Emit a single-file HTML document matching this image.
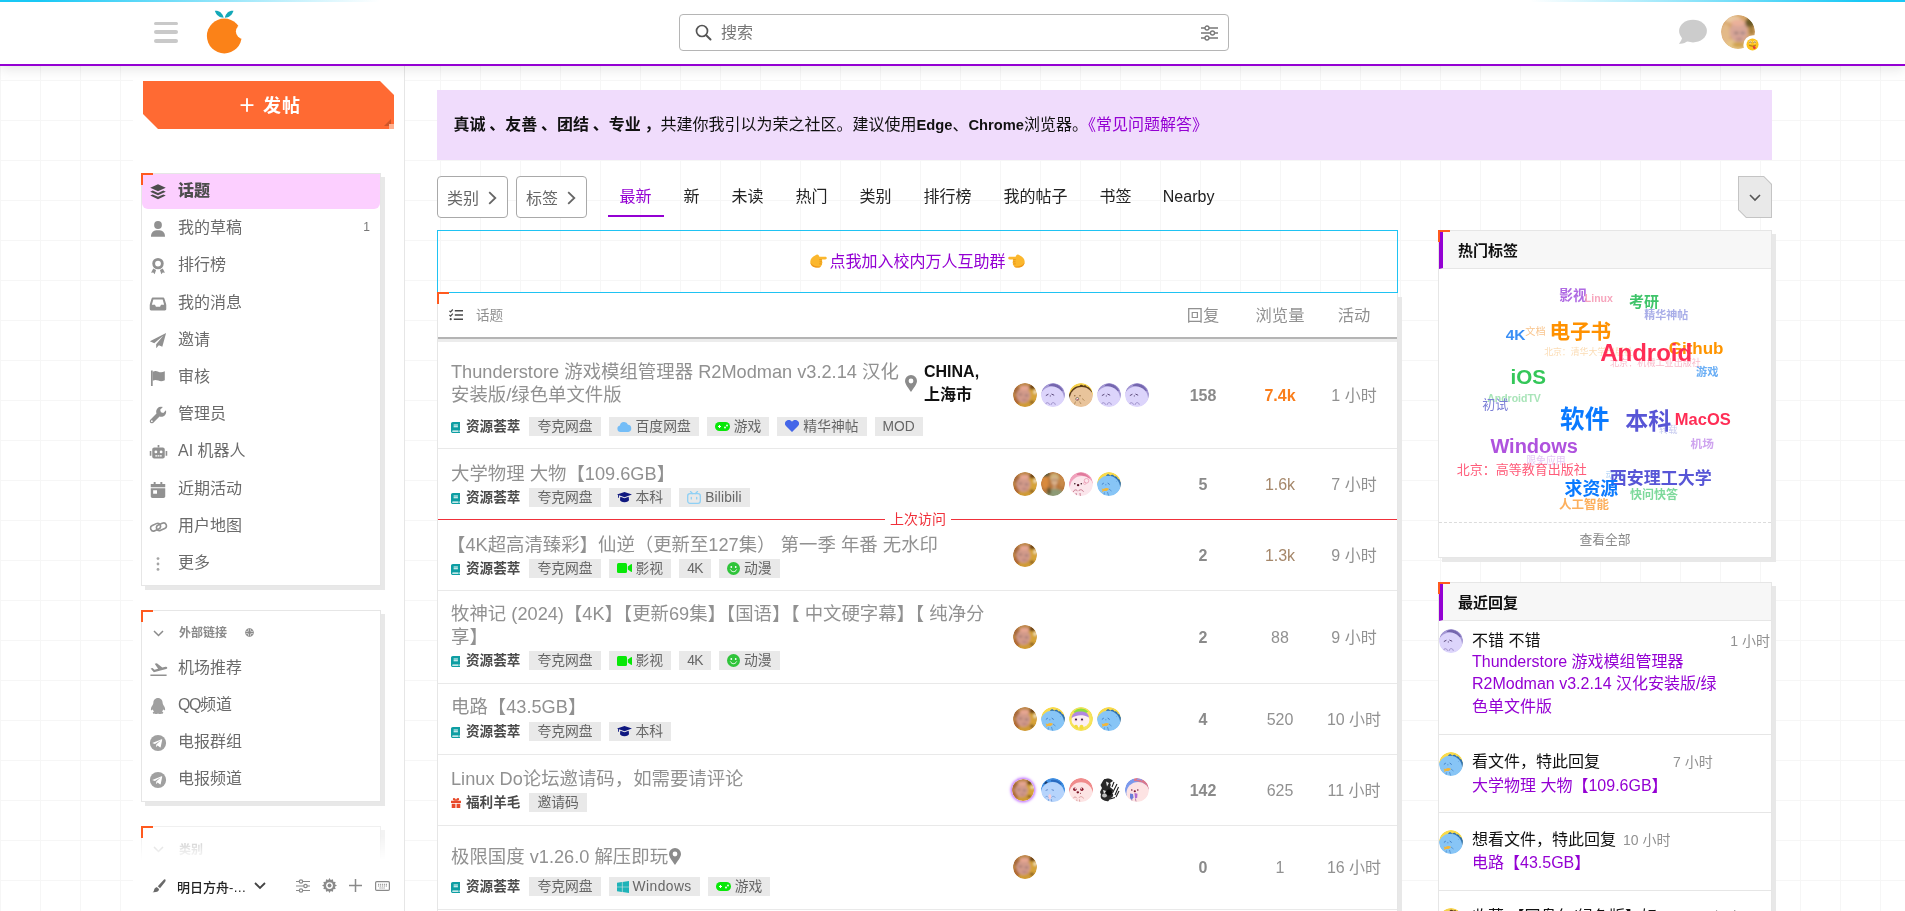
<!DOCTYPE html>
<html lang="zh-CN">
<head>
<meta charset="utf-8">
<title>话题</title>
<style>
*{box-sizing:border-box;margin:0;padding:0}
html,body{width:1905px;height:911px;overflow:hidden}
body{position:relative;font-family:"Liberation Sans","Noto Sans CJK SC",sans-serif;font-size:15px;color:#222;
background-color:#fff;
background-image:linear-gradient(#f6f6f6 1px,transparent 1px),linear-gradient(90deg,#f6f6f6 1px,transparent 1px);
background-size:40px 40px;}
a{color:inherit;text-decoration:none}
ul{list-style:none}
svg{display:block}
.abs{position:absolute}

/* header */
#hdr{position:absolute;left:0;top:0;width:1905px;height:66px;background:#fff;border-bottom:2px solid #9400d3;box-shadow:0 3px 12px rgba(0,0,0,.11);z-index:5}
#topline{position:absolute;left:0;top:0;width:1905px;height:2px;z-index:6;
background:linear-gradient(90deg,#19c8f5 0,#19c8f5 40px,rgba(25,200,245,0) 380px,rgba(25,200,245,0) 1530px,#19c8f5 1860px,#19c8f5 1905px)}
#burger{position:absolute;left:154px;top:21px;width:24px;height:22px}
#burger i{position:absolute;left:0;width:24px;height:3.500px;border-radius:2px;background:#c9c9c9}
#logo{position:absolute;left:203px;top:8px}
#search{position:absolute;left:679px;top:14px;width:550px;height:37px;border:1px solid #b5b5b5;border-radius:4px;background:#fff}
#search .ph{position:absolute;left:41px;top:7px;font-size:16px;color:#777;line-height:22px}
#search .mag{position:absolute;left:14.500px;top:8.500px}
#search .flt{position:absolute;right:10px;top:10px}
#chat{position:absolute;left:1677px;top:18px}
#me{position:absolute;left:1721px;top:15px;width:34px;height:34px;border-radius:50%}
#me-emoji{position:absolute;left:1746px;top:38px;width:13px;height:13px}

/* sidebar */
#sb{position:absolute;left:133px;top:66px;width:272px;height:845px;background:#fff;border-right:1px solid #e6e6e6}
#newbtn{position:absolute;left:10px;top:15px;width:251px;height:48px;background:#ff6a33;color:#fff;font-weight:bold;font-size:18px;
clip-path:polygon(0 0,237px 0,100% 14px,100% 100%,15px 100%,0 33px);text-align:center;line-height:51px;letter-spacing:1px;padding-left:2px}
#newbtn .tri{position:absolute;left:241px;top:37.500px;width:0;height:0;border-left:7px solid transparent;border-bottom:7.300px solid #cf5528}
#newbtn .sq{position:absolute;left:246px;top:43px;width:5px;height:5px;background:#ffb08f}
.card{position:absolute;background:#fff;border:1px solid #e6e6e6;box-shadow:4px 4px 0 #e8e8e8}
.card:before{content:"";position:absolute;left:-1px;top:-1px;width:10px;height:10px;border-left:2px solid #ff5a1f;border-top:2px solid #ff5a1f;z-index:2}
.sbi{position:relative;height:37.2px;line-height:33px;padding-left:36px;font-size:16px;color:#6b6b6b}
.sbi svg{position:absolute;left:8px;top:10px;transform:scale(1.08)}
.sbi.act{background:#fccfff;color:#4d4d4d;font-weight:bold;border-radius:0 0 6px 6px}
.sbh{position:relative;height:37px;line-height:37px;padding-left:37px;font-size:12px;font-weight:bold;color:#8a8a8a}

.sbi b{position:relative}
.sbi .bg{position:absolute;left:0;top:0;right:0;height:35px;background:#fccfff;border-radius:0 0 6px 6px}
.sbi.act{background:none}
.sbi em{position:absolute;right:10px;top:0;font-style:normal;font-size:12px;color:#777}
.sbh .chev{position:absolute;left:11px;top:19px}
.sbh .globe{display:inline-block;margin-left:18px;vertical-align:0}
#c2 .sbh,#c3 .sbh{height:39.500px;line-height:45px}
#c3 .sbh{color:#c6c6c6;padding-top:1px}
#c3{border-color:#f0f0f0;box-shadow:4px 4px 0 #f3f3f3}
#sbfade{position:absolute;left:0;top:770px;width:271px;height:24px;background:linear-gradient(rgba(255,255,255,0),#fff)}
#sbfoot{position:absolute;left:0;top:794px;width:271px;height:51px;background:#fff}
#sbfoot svg{position:absolute;margin-top:6px}
#sbfoot .theme{position:absolute;left:44px;top:17.500px;font-weight:500;font-size:13px;line-height:20px;color:#222}

/* main */
#main{position:absolute;left:437px;top:0;width:1335px;height:911px}
#banner{position:absolute;left:0;top:90px;width:1335px;height:70px;background:#f0dcfc;padding-left:16.500px;line-height:70px;font-size:16px;color:#111;white-space:nowrap}
#banner a{color:#9400d3}
#banner .la{font-size:14.700px}
#nav{position:absolute;left:0;top:176px;width:1335px;height:41px}
.nbtn{position:absolute;top:0;width:71px;height:42px;border:1px solid #a9a9a9;border-radius:4px;background:#fff;font-size:16px;color:#666;line-height:44px;padding-left:9px}
.nbtn svg{position:absolute;right:10.500px;top:14px}
.tab{position:absolute;top:0;margin-left:.6px;height:41px;line-height:42px;text-align:center;font-size:16px;color:#222}
.tab.on{color:#9400d3;border-bottom:2px solid #9400d3}
#ddbtn{position:absolute;right:0;top:0;width:34px;height:42px;background:#c4c4c4;clip-path:polygon(0 0,26px 0,100% 8px,100% 100%,8px 100%,0 34px)}
#ddbtn div{position:absolute;left:1px;top:1px;width:32px;height:40px;background:#e9e9e9;clip-path:polygon(0 0,24.600px 0,100% 7.400px,100% 100%,7.400px 100%,0 32.600px)}
#ddbtn svg{position:absolute;left:10px;top:17px}
#join{position:absolute;left:0;top:230px;width:961px;height:63px;border:1px solid #1fc3f3;display:flex;align-items:center;justify-content:center;font-size:16px;color:#9400d3;padding-bottom:5px}
#join span{margin:0 2px;position:relative;top:1px}
#join svg{position:relative;top:1.500px}
.card2{position:absolute;background:#fff;border:1px solid #e6e6e6;box-shadow:4px 4px 0 #e8e8e8}
.card2:before{content:"";position:absolute;left:-1px;top:-1px;width:10px;height:10px;border-left:2px solid #ff5a1f;border-top:2px solid #ff5a1f;z-index:2}
#list{left:0;top:293px;width:961px;height:640px;border-top:none;border-bottom:none}

#lh{position:absolute;left:0;top:0;width:959px;height:46px;border-bottom:2px solid #b4b4b4;color:#919191}
#lh svg{position:absolute;left:11.200px;top:15.600px}
#lh .t{position:absolute;left:38px;top:12.500px;font-size:13.600px;line-height:20px}
#lh .c{position:absolute;top:10.500px;font-size:16.300px;line-height:22px;text-align:center}
.row{position:absolute;left:0;width:959px;border-bottom:1px solid #e9e9e9}
.row.first{border-top:3px solid #ececec}
.row .tl{position:absolute;font-size:18.400px;line-height:22.300px;color:#919191;white-space:nowrap}
.row .meta{position:absolute;left:13px;display:flex;align-items:center;height:19px;white-space:nowrap}
.cat{display:inline-flex;align-items:center;font-size:13.600px;line-height:19px;font-weight:bold;color:#4a4a4a;margin-right:9px}
.cat .ci{margin-right:6px;margin-top:2px}
.cat .ci.gift{margin-right:5px;margin-top:1px}
.tl .la{font-size:18.200px}
.tag{display:inline-flex;align-items:center;height:19px;line-height:19px;padding:0 8px;background:#e9e9e9;font-size:13.800px;color:#666;margin-right:8px}
.tag svg{margin-right:4px}
.loc{position:absolute;left:467.500px;font-size:16px;line-height:22.800px;color:#111;margin-top:1.700px}
.loc b{display:block;margin-left:18.500px}
.loc .pin{position:absolute;left:-.5px;top:13.700px}
.pin2{display:inline-block;vertical-align:-2.500px;margin-left:.5px}
.avs{position:absolute;left:575px;height:24px;display:flex}
.av{display:block;width:24px;height:24px;border-radius:50%;margin-right:4.100px;flex:none}
.av.ring{width:22px;height:22px;margin:1px 6.800px 1px -1px;box-shadow:0 0 2.500px 1.500px #c77dff}
.num{position:absolute;line-height:23px;text-align:center;width:80px;font-size:16px;color:#919191}
.num.r{left:725px;font-weight:bold;color:#8a8a8a}
.num.v{left:802px}
.num.v.hot{color:#fa7d1a;font-weight:bold}
.num.v.warm{color:#a5876a}
.num.a{left:876px}
#lastvisit{position:absolute;left:0;top:226px;width:959px;height:1px;background:#f0303a}
#lastvisit span{position:absolute;left:447px;top:-10px;background:#fff;padding:0 5px;font-size:14px;line-height:20px;color:#f0303a}

#hot{left:1001px;top:230px;width:334px;height:328px}
#recent{left:1001px;top:582px;width:334px;height:360px}
.ch{position:absolute;left:0;top:0;width:332px;height:38px;background:#f7f7f7;border-bottom:1px solid #e6e6e6;border-left:4px solid #9400d3;font-size:15px;line-height:40px;padding-left:15px;color:#111;font-weight:bold}
#cloud{position:absolute;left:0;top:0;width:332px;height:290px}
.ct{position:absolute;white-space:nowrap;line-height:1;transform:translate(-50%,-50%)}
#viewall{position:absolute;left:0;top:291px;width:332px;height:34px;border-top:1px dashed #dcdcdc;text-align:center;font-size:12.800px;line-height:33px;color:#888}
.rp{position:absolute;left:0;width:332px;border-bottom:1px solid #e6e6e6}
.av2{position:absolute;left:0;width:24px;height:24px;border-radius:50%}
.rp .tx{position:absolute;left:33px;font-size:16px;line-height:22px;color:#111;white-space:nowrap}
.rp .tm{position:absolute;font-size:14px;line-height:20px;color:#919191;white-space:nowrap}
.rp .lk{position:absolute;left:33px;font-size:16px;line-height:22.300px;color:#9400d3;white-space:nowrap}
#wrap{position:absolute;left:0;top:0;width:1905px;height:911px;overflow:hidden;will-change:transform}
</style>
</head>
<body>
<div id="wrap">
<svg width="0" height="0" style="position:absolute" aria-hidden="true"><defs>
<clipPath id="cc"><circle cx="12" cy="12" r="12"/></clipPath>
<filter id="bl" x="-20%" y="-20%" width="140%" height="140%"><feGaussianBlur stdDeviation="1.15"/></filter>
<filter id="bl2" x="-20%" y="-20%" width="140%" height="140%"><feGaussianBlur stdDeviation=".4"/></filter>
<symbol id="a-me" viewBox="0 0 24 24"><g clip-path="url(#cc)"><g filter="url(#bl)">
<rect x="-2" y="-2" width="28" height="28" fill="#bd8648"/>
<ellipse cx="20" cy="12" rx="5" ry="9" fill="#d6a338"/>
<ellipse cx="12" cy="23" rx="10" ry="4.500" fill="#cf9a34"/>
<ellipse cx="3" cy="18" rx="3.500" ry="5" fill="#b06a30"/>
<ellipse cx="19.500" cy="4" rx="3" ry="2.500" fill="#6e4518"/>
<ellipse cx="22" cy="9" rx="1.500" ry="2" fill="#f3e6c0"/>
<ellipse cx="3" cy="7" rx="3" ry="4" fill="#a86a3a"/>
<ellipse cx="10.500" cy="12.500" rx="7" ry="7.500" fill="#d19a8a"/>
<ellipse cx="11.500" cy="5" rx="4.500" ry="2.300" fill="#e6a692"/>
<ellipse cx="7.500" cy="11.500" rx="2" ry="1" fill="#a87a72"/>
<ellipse cx="13.500" cy="12.500" rx="2" ry="1" fill="#a07a7a"/>
<ellipse cx="11.500" cy="17" rx="2.500" ry="1" fill="#b8807a"/>
<ellipse cx="19" cy="19" rx="2" ry="1.500" fill="#7a5420"/>
</g></g></symbol>
<symbol id="a-me2" viewBox="0 0 24 24"><g clip-path="url(#cc)"><g filter="url(#bl)">
<rect x="-2" y="-2" width="28" height="28" fill="#d6a468"/>
<ellipse cx="9" cy="22" rx="10" ry="5" fill="#e6c486"/>
<ellipse cx="3" cy="13" rx="3.500" ry="7" fill="#e3b988"/>
<ellipse cx="20.500" cy="5.500" rx="3.500" ry="3.500" fill="#6b5a28"/>
<ellipse cx="21.500" cy="11" rx="2" ry="3" fill="#a8803a"/>
<ellipse cx="8" cy="3" rx="6" ry="2.500" fill="#e9c9a0"/>
<ellipse cx="12.500" cy="12" rx="6.500" ry="7.500" fill="#d8a698"/>
<ellipse cx="12" cy="5.500" rx="5" ry="2.300" fill="#eab09a"/>
<ellipse cx="10.800" cy="12.700" rx="1.600" ry=".9" fill="#8f7272"/>
<ellipse cx="15.300" cy="12.700" rx="1.600" ry=".9" fill="#8f7a80"/>
<ellipse cx="13" cy="17" rx="2.500" ry="1.200" fill="#b98a86"/>
<ellipse cx="13" cy="21" rx="5" ry="2" fill="#cfa24c"/>
</g></g></symbol>
<symbol id="a-pur" viewBox="0 0 24 24"><g clip-path="url(#cc)"><g filter="url(#bl2)">
<rect width="24" height="24" fill="#a498d4"/>
<path d="M8 2c4-2.500 10-1.500 14 5.500l-2 1.500c-3-4-6-6-12-6z" fill="#7466ae"/>
<circle cx="11" cy="15.600" r="12" fill="#dcd4fb"/>
<path d="M5.200 12.400l1.900-1M10.800 11.200l2 .9" stroke="#5b4a7a" stroke-width="1" stroke-linecap="round"/>
<circle cx="9.300" cy="12.900" r=".55" fill="#5b4a7a"/>
<path d="M4.500 22c0-3 3.500-3 4-.3M10 22c.3-3 4-3.200 4.300-.2" stroke="#8678b8" stroke-width=".7" fill="none"/>
</g></g></symbol>
<symbol id="a-tan" viewBox="0 0 24 24"><g clip-path="url(#cc)"><g filter="url(#bl2)">
<rect width="24" height="24" fill="#f6d24e"/>
<path d="M-1 16C0 7 7 2.500 10.500 3c.8-1.800 3-1.600 3.700-.2 1.400-1.200 3.200-.5 3.600 1 2 0 3.400 1.400 5.200 5V26H-1z" fill="#5a3a18"/>
<circle cx="12.700" cy="16" r="11.900" fill="#e9c49b"/>
<circle cx="5.800" cy="12.800" r=".7" fill="#8a6238"/><circle cx="11" cy="12.800" r=".7" fill="#8a6238"/>
<circle cx="8.300" cy="16" r="1.500" fill="#fff" stroke="#4a3a2a" stroke-width=".6"/>
<ellipse cx="8.400" cy="16.600" rx=".6" ry=".8" fill="#e0506a"/>
<path d="M6.500 18.500l-1 3M10.500 18.500l1.500 2.500M13 15.500l2.500 2" stroke="#a07a48" stroke-width=".7"/>
</g></g></symbol>
<symbol id="a-ph" viewBox="0 0 24 24"><g clip-path="url(#cc)"><g filter="url(#bl)">
<rect x="-2" y="-2" width="28" height="28" fill="#b9783c"/>
<ellipse cx="4" cy="10" rx="3.500" ry="7" fill="#d98a3e"/>
<ellipse cx="21" cy="9" rx="3" ry="6" fill="#c98a4a"/>
<ellipse cx="3" cy="2" rx="6" ry="3" fill="#5a5a3a"/>
<ellipse cx="13.500" cy="5.500" rx="4.500" ry="4" fill="#cdb47a"/>
<ellipse cx="13.500" cy="9" rx="3.200" ry="4.300" fill="#d9b08a"/>
<ellipse cx="12.300" cy="8" rx=".9" ry=".6" fill="#5a4030"/><ellipse cx="15" cy="8" rx=".9" ry=".6" fill="#5a4030"/>
<ellipse cx="13.500" cy="15.500" rx="2" ry="2.500" fill="#c99a72"/>
<ellipse cx="14" cy="22" rx="9" ry="5" fill="#8d9a74"/>
<ellipse cx="8" cy="19" rx="2" ry="3.500" fill="#6a5a32"/>
</g></g></symbol>
<symbol id="a-pink" viewBox="0 0 24 24"><g clip-path="url(#cc)"><g filter="url(#bl2)">
<rect width="24" height="24" fill="#f0a2bc"/>
<path d="M8 1.500c4-2 9-.5 13 4.500l-1.500 1C16 3.500 12 2.500 8 3z" fill="#e07a9c"/>
<circle cx="12.800" cy="15.800" r="11.900" fill="#fbe6ec"/>
<circle cx="17.500" cy="8.800" r="2.300" fill="#fbe6ec" stroke="#eb9ab4" stroke-width=".8"/>
<circle cx="15.800" cy="11.300" r="1.200" fill="none" stroke="#eb9ab4" stroke-width=".6"/>
<circle cx="5.800" cy="11.800" r=".8" fill="#3a1a22"/><circle cx="12.300" cy="11.800" r=".8" fill="#3a1a22"/>
<ellipse cx="9.100" cy="13.200" rx="1.200" ry="1.100" fill="#5a1428"/>
<path d="M4.300 20c.8-2.500 3.200-2.800 4.300-.8M9.500 19c1.500-2 4-1.500 5 .8M7 21l.5 3M11 21l.3 3" stroke="#b4506c" stroke-width=".7" fill="none"/>
</g></g></symbol>
<symbol id="a-blue" viewBox="0 0 24 24"><g clip-path="url(#cc)"><g filter="url(#bl2)">
<rect width="24" height="24" fill="#f8da4c"/>
<path d="M9 4c1-2.300 3.200-2.300 4.200-.2 1.200-1.600 3.500-1.200 4.200.7 1.500-.6 3 .5 3.200 2 1.500.3 2.500 1.500 3.300 4V24H2z" fill="#2f6fae"/>
<circle cx="11.200" cy="15.600" r="11.900" fill="#87c5f6"/>
<path d="M5.200 12.200l1.300-.9M11 11.300l1.400 1" stroke="#3a78c0" stroke-width=".9" stroke-linecap="round"/>
<circle cx="8.900" cy="12.700" r=".5" fill="#3a78c0"/>
<path d="M19 9l.8.800" stroke="#5a9ad8" stroke-width=".6"/>
<path d="M4.500 16.500l2 .6c1.500-1.300 3.500-1.300 5.500-.4-1 1.800-3 2.800-5.200 2.200L5 20.200l.5-1.700z" fill="#f2b63a"/>
<path d="M12 17l2.500 2M7.500 20.500l-1 3M10.500 20l1 3.500" stroke="#3a78c0" stroke-width=".6" fill="none"/>
</g></g></symbol>
<symbol id="a-yel" viewBox="0 0 24 24"><g clip-path="url(#cc)"><g filter="url(#bl2)">
<rect width="24" height="24" fill="#f7e65c"/>
<ellipse cx="11.500" cy="2.500" rx="8.500" ry="4.500" fill="#8ee03c"/>
<ellipse cx="11.500" cy="13" rx="9" ry="7.500" fill="#fdeff3"/>
<path d="M2.500 11c.5-5 4.500-6.500 9-6.500s8 1.500 8.500 6c-3-1.800-5.500-2.300-8.500-2.300s-6 .8-9 2.800z" fill="#b088e0"/>
<circle cx="6.800" cy="12.700" r="1.800" fill="#f7d3e0"/><circle cx="13" cy="12.700" r="1.800" fill="#f7d3e0"/>
<circle cx="7" cy="12.600" r="1" fill="#2a1838"/><circle cx="13" cy="12.600" r="1" fill="#2a1838"/>
<ellipse cx="7" cy="20.500" rx="2" ry="2.800" fill="#f3dc3c"/><ellipse cx="12.500" cy="20.500" rx="2" ry="2.800" fill="#f3dc3c"/>
<circle cx="12" cy="12" r="11.200" fill="none" stroke="#f5e15a" stroke-width="1.600"/>
</g></g></symbol>
<symbol id="a-blu2" viewBox="0 0 24 24"><g clip-path="url(#cc)"><g filter="url(#bl2)">
<rect width="24" height="24" fill="#3f8fe2"/>
<path d="M3 6l2-3 2.500 2.500z" fill="#1a3a6a"/>
<path d="M10 2c4-1 8 .5 11 4l-2 1c-3-2.500-6-3.500-9-3.500z" fill="#2a6ac0"/>
<circle cx="11.500" cy="15.800" r="11.900" fill="#b6d4fc"/>
<path d="M5 12.300l1.500-.5M11 11.800l1.600.5" stroke="#5a86c8" stroke-width=".9" stroke-linecap="round"/>
<ellipse cx="8.800" cy="18.500" rx="1.400" ry="2.600" fill="#f9cdd6"/>
<path d="M4 19.500c1-1.500 2.500-1.500 3.300 0M10.500 19.500c1-1.600 3-1.500 3.800.2M7.500 21l-.5 3M10.300 21l.5 3" stroke="#6a92d0" stroke-width=".7" fill="none"/>
</g></g></symbol>
<symbol id="a-pk2" viewBox="0 0 24 24"><g clip-path="url(#cc)"><g filter="url(#bl2)">
<rect width="24" height="24" fill="#f08c8c"/>
<circle cx="12" cy="16" r="11.800" fill="#fde4e4"/>
<circle cx="5.800" cy="11.200" r="1.700" fill="#8a1428"/><circle cx="12.800" cy="11.200" r="1.700" fill="#8a1428"/>
<circle cx="6.300" cy="10.800" r=".7" fill="#fff"/><circle cx="12.200" cy="10.800" r=".7" fill="#fff"/>
<ellipse cx="8.800" cy="14.300" rx="1.300" ry="1.100" fill="#7a1426"/>
<circle cx="11.500" cy="15.300" r=".5" fill="#7a1426"/>
<path d="M4 20.500c1-2 3-2 4-.2M9.800 20c1.200-2 3.800-1.800 4.700.5M7.800 21.500l.2 3M10.500 21.500l.2 3" stroke="#d08a8a" stroke-width=".7" fill="none"/>
</g></g></symbol>
<symbol id="a-bw" viewBox="0 0 24 24"><g clip-path="url(#cc)"><g filter="url(#bl2)">
<rect width="24" height="24" fill="#fff"/>
<path d="M7 1c3-1.500 7-.5 9 2l-3 2c1 1 1 2.500 0 4l3.500 3-1.500 3c2 1.500 1.500 4-1 5l-3 3.500-4-1c-2.500-1-4-3-3-6L3 14l2-4-1.500-3z" fill="#2a2a2a"/>
<path d="M9 3.500l3 1.500-2 3.500zM6 12l3 1-2 3z" fill="#e8e8e8"/>
<ellipse cx="7.500" cy="17.500" rx="2.500" ry="2" fill="#bdbdbd"/>
<ellipse cx="12" cy="14.500" rx="2.800" ry="3" fill="#0a0a0a"/>
<path d="M20 6l-4.500 9M21.500 9l-3.500 8M22 13l-3 6M17 4l-2 5" stroke="#1a1a1a" stroke-width="1.100"/>
<path d="M13 21l5-1.500" stroke="#1a1a1a" stroke-width="1.300"/>
</g></g></symbol>
<symbol id="a-pk3" viewBox="0 0 24 24"><g clip-path="url(#cc)"><g filter="url(#bl2)">
<rect width="24" height="24" fill="#7c9aec"/>
<path d="M9 0h15v12c-2-5-6-8.500-15-9z" fill="#d9788e"/>
<path d="M12 1.500c2-1 4-.5 5 1" stroke="#8a9af0" stroke-width="1.200" fill="none"/>
<circle cx="13" cy="15.500" r="11.600" fill="#fde3e3"/>
<circle cx="6.800" cy="12" r=".8" fill="#7a1a3a"/><circle cx="12.800" cy="12" r=".8" fill="#7a1a3a"/>
<ellipse cx="9.800" cy="13.200" rx="1.100" ry="1" fill="#7a1430"/>
<path d="M5 15.500l3 .5.500 3.500-2 2.500-1.500-2z" fill="#6a7ed8"/>
<path d="M9.500 15l3 .8-.3 4-2.200 1z" fill="#b06ad0"/>
<path d="M7 21.500l-.5 2M10.500 21l.5 2.500" stroke="#a05a8a" stroke-width=".7"/>
</g></g></symbol>
</defs></svg>
<div id="topline"></div>
<header id="hdr">
  <div id="burger"><i style="top:.5px"></i><i style="top:9.200px"></i><i style="top:18px"></i></div>
  <div id="logo"><svg width="42" height="48" viewBox="0 0 42 48"><defs><mask id="bite"><rect width="42" height="48" fill="#fff"/><circle cx="40.500" cy="23.500" r="7.600" fill="#000"/></mask></defs>
    <path d="M11.800 2.800c4.300-.4 7.800 2.300 8.900 7-4.300-.2-7.400-2.500-8.900-7z" fill="#14a8b8"/><path d="M30.500 2.800c-4.300-.4-7.700 2.300-8.700 7 4.200-.2 7.300-2.500 8.700-7z" fill="#14a8b8"/>
    <circle cx="21.300" cy="28" r="17.400" fill="#fb8218" mask="url(#bite)"/></svg></div>
  <div id="search">
    <svg class="mag" width="17" height="17" viewBox="0 0 17 17"><circle cx="7" cy="7" r="5.500" fill="none" stroke="#555" stroke-width="1.700"/><path d="M11.200 11.200l4.300 4.300" stroke="#555" stroke-width="2" stroke-linecap="round"/></svg>
    <span class="ph">搜索</span>
    <svg class="flt" width="17" height="16" viewBox="0 0 17 16" fill="none" stroke="#777" stroke-width="1.300"><path d="M0 3h17M0 8h17M0 13h17"/><circle cx="6" cy="3" r="2" fill="#fff"/><circle cx="11.500" cy="8" r="2" fill="#fff"/><circle cx="6" cy="13" r="2" fill="#fff"/></svg>
  </div>
  <svg id="chat" width="31" height="27" viewBox="0 0 31 27" fill="#cccccc"><ellipse cx="16" cy="13.100" rx="13.900" ry="11.300"/><path d="M5.500 18c-.5 3-1.600 5.500-3.600 7.700 3.500.5 6.500-.8 9-2.700z"/></svg>
  <svg id="me" viewBox="0 0 34 34"><defs><mask id="mecut"><rect width="34" height="34" fill="#fff"/><circle cx="32.100" cy="29.900" r="9.700" fill="#000"/></mask></defs><g mask="url(#mecut)"><use href="#a-me2" width="34" height="34"/></g></svg>
  <svg id="me-emoji" viewBox="0 0 14 14"><circle cx="7" cy="7" r="6.500" fill="#fcc21b"/><circle cx="4.600" cy="4.300" r="1.700" fill="#fde9a8"/><circle cx="9.400" cy="4.300" r="1.700" fill="#fde9a8"/><path d="M3.200 5c.8-.9 2-.9 2.800 0M8 5c.8-.9 2-.9 2.800 0" stroke="#7a4a12" stroke-width=".8" fill="none"/><path d="M3.500 7.800c2 1.200 5 1.200 7 0" stroke="#7a4a12" stroke-width=".8" fill="none"/><path d="M7.500 8.600c1.800-.2 3.200.6 3 2.200-.2 1.300-2 1.600-3 .3z" fill="#e8383e"/></svg>
</header>

<aside id="sb">
  <div id="newbtn"><span>＋ 发帖</span><i class="tri"></i><i class="sq"></i></div>

  <div class="card" id="c1" style="left:8px;top:107px;width:240px;height:413px">
    <ul>
      <li class="sbi act"><span class="bg"></span><svg width="16" height="16" viewBox="0 0 16 16" fill="#4d4d4d"><path d="M8 .8l7.200 3.300L8 7.400.8 4.100z"/><path d="M.8 7.700l2.300-1 4.900 2.200 4.900-2.200 2.300 1L8 11z"/><path d="M.8 11.300l2.300-1 4.900 2.200 4.900-2.200 2.300 1L8 14.600z"/></svg><b>话题</b></li>
      <li class="sbi"><svg width="16" height="16" viewBox="0 0 16 16" fill="#919191"><circle cx="8" cy="4.300" r="3.600"/><path d="M1.500 15.200c0-4.200 2.300-6 6.500-6s6.500 1.800 6.500 6z"/></svg>我的草稿<em>1</em></li>
      <li class="sbi"><svg width="16" height="16" viewBox="0 0 16 16" fill="#919191"><path d="M8 .5a5.300 5.300 0 1 1 0 10.600A5.300 5.300 0 0 1 8 .5zm0 2.600a2.700 2.700 0 1 0 0 5.400 2.700 2.700 0 0 0 0-5.400z"/><path d="M3.600 10.300l2.600 1.300-1.300 4-1.300-1.600-2 .3zM12.400 10.300l-2.600 1.300 1.300 4 1.300-1.600 2 .3z"/></svg>排行榜</li>
      <li class="sbi"><svg width="16" height="16" viewBox="0 0 16 16" fill="#919191"><path d="M3.500 2h9c.7 0 1.300.5 1.500 1.100l1.800 5.900v3.500c0 .9-.7 1.500-1.500 1.500H1.700c-.9 0-1.500-.7-1.500-1.500V9L2 3.100C2.200 2.500 2.800 2 3.500 2zm.2 1.800L2.300 8.700h2.900l.9 1.800h3.800l.9-1.800h2.900l-1.400-4.900z" fill-rule="evenodd"/></svg>我的消息</li>
      <li class="sbi"><svg width="16" height="16" viewBox="0 0 16 16" fill="#919191"><path d="M15.500.6L.5 8.300l4 1.700 8.300-6.800-6.500 7.800v3.800l2.500-2.900 3.200 1.400z"/></svg>邀请</li>
      <li class="sbi"><svg width="16" height="16" viewBox="0 0 16 16" fill="#919191"><path d="M1.500 1h1.600v14.500H1.500z"/><path d="M3.100 2.200c2-1 3.500-.8 5.200-.1 1.800.7 3.400.8 6-.3v8.300c-2.400 1.100-4.200 1-6 .3-1.700-.7-3.200-.9-5.200.1z"/></svg>审核</li>
      <li class="sbi"><svg width="16" height="16" viewBox="0 0 16 16" fill="#919191"><path d="M15.400 3.600l-2.500 2.500-2.200-.7-.7-2.200L12.500.7C10.800.1 8.900.5 7.600 1.800 6.300 3.100 6 5 6.600 6.600L.9 12.300c-.8.800-.8 2 0 2.800s2 .8 2.800 0l5.700-5.700c1.600.6 3.500.3 4.800-1 1.300-1.300 1.700-3.200 1.200-4.800zM2.300 14.500a.8.8 0 1 1 0-1.600.8.800 0 0 1 0 1.600z"/></svg>管理员</li>
      <li class="sbi"><svg width="17" height="16" viewBox="0 0 17 16" fill="#919191"><path d="M7.700 1.500h1.600v2.300H7.700z"/><path d="M4.500 3.800h8c1 0 1.800.8 1.800 1.800v6.600c0 1-.8 1.800-1.800 1.800h-8c-1 0-1.800-.8-1.800-1.800V5.600c0-1 .8-1.800 1.800-1.800zm1.600 2.800a1.300 1.300 0 1 0 0 2.600 1.300 1.300 0 0 0 0-2.600zm4.800 0a1.300 1.300 0 1 0 0 2.600 1.300 1.300 0 0 0 0-2.600zM5.500 11v1.200h1.700V11zm2.200 0v1.200h1.600V11zm2.100 0v1.200h1.700V11z" fill-rule="evenodd"/><path d="M.3 7h1.600v4.500H.3zM15.100 7h1.600v4.500h-1.600z"/></svg>AI 机器人</li>
      <li class="sbi"><svg width="16" height="16" viewBox="0 0 16 16" fill="#919191"><path d="M4 .5h1.800v2.300H4zM10.200.5H12v2.300h-1.800z"/><path d="M1.300 2.500h13.400v3H1.300z"/><path d="M1.300 6.300h13.400v7.600c0 .9-.7 1.600-1.600 1.600H2.900c-.9 0-1.600-.7-1.600-1.600zm2.200 1.900v3.300h3.600V8.200z" fill-rule="evenodd"/></svg>近期活动</li>
      <li class="sbi"><svg width="17" height="16" viewBox="0 0 17 16" fill="none" stroke="#919191" stroke-width="1.500"><rect x="1" y="5.500" width="9.500" height="5.400" rx="2.700" transform="rotate(-25 5.700 8.200)"/><rect x="6.500" y="5.100" width="9.500" height="5.400" rx="2.700" transform="rotate(-25 11.200 7.800)"/></svg>用户地图</li>
      <li class="sbi"><svg width="16" height="16" viewBox="0 0 16 16" fill="#a5a5a5"><circle cx="8" cy="3" r="1.300"/><circle cx="8" cy="8" r="1.300"/><circle cx="8" cy="13" r="1.300"/></svg>更多</li>
    </ul>
  </div>
  <div class="card" id="c2" style="left:8px;top:544px;width:240px;height:192px">
    <div class="sbh"><svg class="chev" width="11" height="7" viewBox="0 0 11 7" fill="none" stroke="#8a8a8a" stroke-width="1.500"><path d="M1 1l4.500 4.500L10 1"/></svg>外部链接<svg class="globe" width="9" height="9" viewBox="0 0 10 10" fill="none" stroke="#8a8a8a" stroke-width="1.200"><circle cx="5" cy="5" r="4.200"/><path d="M.8 5h8.400M5 .8v8.400M2.500 1.800c1.500 2 1.500 4.400 0 6.400M7.500 1.800c-1.500 2-1.500 4.400 0 6.400"/></svg></div>
    <ul>
      <li class="sbi"><svg width="17" height="16" viewBox="0 0 17 16" fill="#919191"><path d="M1 13h15v1.500H1z"/><path d="M1.200 7.500l1.800-.5 1.800 1.700 3.300-.9L5 3.200l2-.5 5 4 3-.8c.8-.2 1.500.2 1.700.9.100.5-.4 1-1.100 1.200L4.200 11.100 1.200 7.500z"/></svg>机场推荐</li>
      <li class="sbi"><svg width="16" height="16" viewBox="0 0 16 16" fill="#a0a0a0"><path d="M8 .5c2.800 0 4.300 2.200 4.300 4.600 0 .6.100 1 .4 1.500.9 1.400 1.900 2.900 1.900 4.400 0 .7-.3 1-.6 1-.4 0-.8-.6-1.100-1.100-.2.900-.6 1.600-1.200 2.200.7.300 1.200.7 1.200 1.200 0 .8-1.300 1.100-2.700 1.100-1 0-1.800-.2-2.200-.5-.4.300-1.200.5-2.200.5-1.400 0-2.700-.3-2.700-1.100 0-.5.500-.9 1.200-1.200-.6-.6-1-1.300-1.200-2.200-.3.500-.7 1.100-1.100 1.100-.3 0-.6-.3-.6-1 0-1.500 1-3 1.900-4.400.3-.5.400-.9.400-1.500C3.700 2.700 5.200.5 8 .5z"/></svg><span style="letter-spacing:-1.400px">QQ</span>频道</li>
      <li class="sbi"><svg width="16" height="16" viewBox="0 0 16 16"><circle cx="8" cy="8" r="7.500" fill="#a0a0a0"/><path d="M3.300 7.800l8-3.300c.4-.1.700.1.600.6l-1.400 6.500c-.1.500-.4.600-.8.400l-2.100-1.600-1 1c-.1.100-.2.200-.4.200l.2-2.200 4-3.600c.2-.2 0-.2-.2-.1L5.200 8.900l-2-.6c-.4-.2-.4-.4.100-.5z" fill="#fff"/></svg>电报群组</li>
      <li class="sbi"><svg width="16" height="16" viewBox="0 0 16 16"><circle cx="8" cy="8" r="7.500" fill="#a0a0a0"/><path d="M3.300 7.800l8-3.300c.4-.1.700.1.600.6l-1.400 6.500c-.1.500-.4.600-.8.400l-2.100-1.600-1 1c-.1.100-.2.200-.4.200l.2-2.200 4-3.600c.2-.2 0-.2-.2-.1L5.200 8.900l-2-.6c-.4-.2-.4-.4.100-.5z" fill="#fff"/></svg>电报频道</li>
    </ul>
  </div>
  <div class="card" id="c3" style="left:8px;top:760px;width:240px;height:120px">
    <div class="sbh"><svg class="chev" width="11" height="7" viewBox="0 0 11 7" fill="none" stroke="#d0d0d0" stroke-width="1.500"><path d="M1 1l4.500 4.500L10 1"/></svg>类别</div>
  </div>
  <div id="sbfade"></div>
  <div id="sbfoot">
    <svg style="left:19px;top:13px" width="14" height="14" viewBox="0 0 14 14" fill="#6a6a6a"><path d="M13.300.5c.6.500.4 1.400-.3 2.400L8 9.200 5.800 7.300l5.500-6.100c.7-.8 1.400-1.200 2-.7zM5 8.200l2 1.800c0 2.400-2.200 3.600-6.500 3.300 1.700-.8 1.300-2.200 2-3.600.5-.9 1.400-1.500 2.500-1.500z"/></svg>
    <span class="theme">明日方舟-…</span>
    <svg style="left:121px;top:16px" width="12" height="8" viewBox="0 0 12 8" fill="none" stroke="#444" stroke-width="1.800"><path d="M1 1l5 5 5-5"/></svg>
    <svg style="left:163px;top:13px" width="14" height="14" viewBox="0 0 14 14" fill="none" stroke="#8a8a8a" stroke-width="1.200"><path d="M0 2.500h14M0 7h14M0 11.500h14"/><circle cx="5" cy="2.500" r="1.700" fill="#fff"/><circle cx="9.500" cy="7" r="1.700" fill="#fff"/><circle cx="5" cy="11.500" r="1.700" fill="#fff"/></svg>
    <svg style="left:189px;top:12px" width="15" height="15" viewBox="0 0 16 16"><path d="M8 0l1.300 2.200 2.400-.9.300 2.600 2.600.3-.9 2.400L16 8l-2.300 1.400.9 2.400-2.600.3-.3 2.600-2.400-.9L8 16l-1.300-2.200-2.400.9-.3-2.600-2.600-.3.900-2.400L0 8l2.300-1.400-.9-2.400 2.600-.3.300-2.600 2.400.9z" fill="#8a8a8a"/><circle cx="8" cy="8" r="3.600" fill="#fff"/><circle cx="8" cy="8" r="2.100" fill="#8a8a8a"/></svg>
    <svg style="left:216px;top:13px" width="13" height="13" viewBox="0 0 13 13" stroke="#8a8a8a" stroke-width="1.500"><path d="M6.500 0v13M0 6.500h13"/></svg>
    <svg style="left:242px;top:15px" width="15" height="10" viewBox="0 0 15 10" fill="none" stroke="#8a8a8a" stroke-width="1.200"><rect x=".6" y=".6" width="13.800" height="8.800" rx="1.200"/><path d="M3 3.300h9M3 5h9M4.500 7h6" stroke-width="1" stroke-dasharray="1.200 .8"/></svg>
  </div>
</aside>

<main id="main">
  <div id="banner"><b style="word-spacing:-.7px">真诚 、友善 、团结 、专业 ，</b>共建你我引以为荣之社区。建议使用<b class="la">Edge</b>、<b class="la">Chrome</b>浏览器。<a href="#">《常见问题解答》</a></div>
  <nav id="nav">
    <a class="nbtn" style="left:0">类别<svg width="9" height="14" viewBox="0 0 9 14" fill="none" stroke="#666" stroke-width="1.800"><path d="M1.200 1.200L7.300 7l-6.100 5.800"/></svg></a>
    <a class="nbtn" style="left:79px">标签<svg width="9" height="14" viewBox="0 0 9 14" fill="none" stroke="#666" stroke-width="1.800"><path d="M1.200 1.200L7.300 7l-6.100 5.800"/></svg></a>
    <a class="tab on" style="left:170px;width:56px">最新</a>
    <a class="tab" style="left:226px;width:56px">新</a>
    <a class="tab" style="left:282px;width:56px">未读</a>
    <a class="tab" style="left:346px;width:56px">热门</a>
    <a class="tab" style="left:410px;width:56px">类别</a>
    <a class="tab" style="left:474px;width:72px">排行榜</a>
    <a class="tab" style="left:554px;width:88px">我的帖子</a>
    <a class="tab" style="left:650px;width:56px">书签</a>
    <a class="tab" style="left:714px;width:74px">Nearby</a>
    <div id="ddbtn"><div><svg width="12" height="8" viewBox="0 0 12 8" fill="none" stroke="#555" stroke-width="1.600"><path d="M1 1l5 5 5-5"/></svg></div></div>
  </nav>
  <div id="join"><svg width="17" height="14" viewBox="0 0 17 14"><path d="M5.500 1.200c1-.9 2.600-.9 3.300.2l.6 1.300h5.800c1 0 1.600.6 1.600 1.400s-.6 1.400-1.600 1.400h-3.600c.6.500.8 1.300.4 2 .5.600.5 1.500 0 2.100.3.700.1 1.500-.6 2-.3 1.100-1.300 1.800-2.600 1.800H6c-3.300 0-5.700-2.300-5.700-5.600 0-3 2-5.300 5.200-6.600z" fill="#fbb72d"/><path d="M.4 8.600c.4 2.800 2.600 4.800 5.600 4.800h2.800c.9 0 1.700-.4 2.200-1C8 13 3 12.500.4 8.600z" fill="#ee961a"/><path d="M9.600 5.700h2M9.900 7.800h1.800M9.600 9.900h1.700" stroke="#e08a10" stroke-width=".7" stroke-linecap="round"/></svg><span>点我加入校内万人互助群</span><svg width="17" height="14" viewBox="0 0 17 14" style="transform:scaleX(-1)"><path d="M5.500 1.200c1-.9 2.600-.9 3.300.2l.6 1.300h5.800c1 0 1.600.6 1.600 1.400s-.6 1.400-1.600 1.400h-3.600c.6.500.8 1.300.4 2 .5.600.5 1.500 0 2.100.3.700.1 1.500-.6 2-.3 1.100-1.300 1.800-2.600 1.800H6c-3.300 0-5.700-2.300-5.700-5.600 0-3 2-5.300 5.200-6.600z" fill="#fbb72d"/><path d="M.4 8.600c.4 2.800 2.600 4.800 5.600 4.800h2.800c.9 0 1.700-.4 2.200-1C8 13 3 12.500.4 8.600z" fill="#ee961a"/><path d="M9.600 5.700h2M9.900 7.800h1.800M9.600 9.900h1.700" stroke="#e08a10" stroke-width=".7" stroke-linecap="round"/></svg></div>
  <section id="list" class="card2">
    <div id="lh"><svg width="14" height="12" viewBox="0 0 14 12" fill="none" stroke="#4a4a4a" stroke-width="1.400"><path d="M5.800 1.800H14M5.800 6H14M4.800 10.200H14"/><path d="M.4 1.900l1.200 1.100L3.800.5M.4 6l1.200 1.100 2.200-2.500" stroke-width="1.200"/><circle cx="1.700" cy="10.200" r="1.100" fill="#4a4a4a" stroke="none"/></svg><span class="t">话题</span><span class="c" style="left:725px;width:80px">回复</span><span class="c" style="left:802px;width:80px">浏览量</span><span class="c" style="left:876px;width:80px">活动</span></div>
    <article class="row first" style="top:46px;height:110px">
      <div class="tl" style="top:19.4px;left:13px"><a class="title"><span class="la">Thunderstore</span> 游戏模组管理器 <span class="la">R2Modman v3.2.14</span> 汉化<br>安装版/绿色单文件版</a></div><div class="loc" style="top:17.6px"><svg class="pin" width="12" height="17" viewBox="0 0 12 17"><path d="M6 0a6 6 0 0 1 6 6c0 3.200-3.700 7.600-6 11C3.700 13.600 0 9.200 0 6a6 6 0 0 1 6-6zm0 3.600a2.400 2.400 0 1 0 0 4.800 2.400 2.400 0 0 0 0-4.800z" fill="#8b8b8b" fill-rule="evenodd"/></svg><b>CHINA,<br>上海市</b></div><div class="meta" style="top:74.9px"><span class="cat"><svg class="ci" width="9" height="11" viewBox="0 0 9 11"><path d="M1.800 0H9v8.600H8.300v1.200H9V11H1.800C.8 11 0 10.200 0 9.200V1.800C0 .8.800 0 1.800 0z" fill="#0e9ea3"/><path d="M2.600 2.500h4.300v1H2.600zM2.600 4.300h4.300v1H2.600z" fill="#fff"/><path d="M1.800 8.600h5.700v1.200H1.800a.6.6 0 0 1 0-1.200z" fill="#fff"/></svg>资源荟萃</span><span class="tag">夸克网盘</span><span class="tag"><svg width="15" height="11" viewBox="0 0 15 11"><path d="M3.500 11a3.300 3.300 0 0 1-.6-6.500A4.200 4.200 0 0 1 11 3.700a3.700 3.700 0 0 1 .3 7.300z" fill="#74bdf7"/></svg>百度网盘</span><span class="tag"><svg width="15" height="9" viewBox="0 0 15 9"><rect width="15" height="9" rx="4.500" fill="#08e808"/><path d="M3 4.500h3M4.500 3v3" stroke="#fff" stroke-width="1.100"/><circle cx="10" cy="5.500" r=".9" fill="#fff"/><circle cx="12" cy="3.500" r=".9" fill="#fff"/></svg>游戏</span><span class="tag"><svg width="14" height="12" viewBox="0 0 14 12"><path d="M7 12L1.200 6.300a3.600 3.600 0 0 1 0-5.200 3.700 3.700 0 0 1 5.200 0l.6.600.6-.6a3.700 3.700 0 0 1 5.200 0 3.600 3.600 0 0 1 0 5.200z" fill="#4466e8"/></svg>精华神帖</span><span class="tag">MOD</span></div>
      <div class="avs" style="top:41.0px"><svg class="av" viewBox="0 0 24 24"><use href="#a-me"/></svg><svg class="av" viewBox="0 0 24 24"><use href="#a-pur"/></svg><svg class="av" viewBox="0 0 24 24"><use href="#a-tan"/></svg><svg class="av" viewBox="0 0 24 24"><use href="#a-pur"/></svg><svg class="av" viewBox="0 0 24 24"><use href="#a-pur"/></svg></div>
      <span class="num r" style="top:42.0px">158</span><span class="num v hot" style="top:42.0px">7.4k</span><span class="num a" style="top:42.0px">1 小时</span>
    </article>
    <article class="row" style="top:156px;height:71px">
      <div class="tl" style="top:13.6px;left:13px"><a class="title">大学物理 大物【<span class="la">109.6GB</span>】</a></div><div class="meta" style="top:38.5px"><span class="cat"><svg class="ci" width="9" height="11" viewBox="0 0 9 11"><path d="M1.800 0H9v8.600H8.300v1.200H9V11H1.800C.8 11 0 10.200 0 9.200V1.800C0 .8.800 0 1.800 0z" fill="#0e9ea3"/><path d="M2.600 2.500h4.300v1H2.600zM2.600 4.300h4.300v1H2.600z" fill="#fff"/><path d="M1.800 8.600h5.700v1.200H1.800a.6.6 0 0 1 0-1.200z" fill="#fff"/></svg>资源荟萃</span><span class="tag">夸克网盘</span><span class="tag"><svg width="15" height="11" viewBox="0 0 15 11" fill="#0f1880"><path d="M7.500 0L15 2.600 7.500 5.200 2 3.300v2.500H1.100V3L0 2.600z"/><path d="M3.300 4.700l4.200 1.500 4.200-1.500.3 3.300c0 1.200-2 2.200-4.500 2.200S3 9.200 3 8z"/></svg>本科</span><span class="tag"><svg width="14" height="13" viewBox="0 0 14 13" fill="none" stroke="#8fd0f5" stroke-width="1.300"><rect x=".7" y="2.700" width="12.600" height="9.600" rx="2.200"/><path d="M3.500.5l2 2M10.500.5l-2 2" stroke-linecap="round"/><path d="M4.300 6.300v1.600M9.700 6.300v1.600" stroke-linecap="round"/></svg><span style="letter-spacing:.15px">Bilibili</span></span></div>
      <div class="avs" style="top:23.0px"><svg class="av" viewBox="0 0 24 24"><use href="#a-me"/></svg><svg class="av" viewBox="0 0 24 24"><use href="#a-ph"/></svg><svg class="av" viewBox="0 0 24 24"><use href="#a-pink"/></svg><svg class="av" viewBox="0 0 24 24"><use href="#a-blue"/></svg></div>
      <span class="num r" style="top:24.0px">5</span><span class="num v warm" style="top:24.0px">1.6k</span><span class="num a" style="top:24.0px">7 小时</span>
    </article>
    <article class="row" style="top:227px;height:71px">
      <div class="tl" style="top:13.6px;left:9px"><a class="title">【<span class="la">4K</span>超高清臻彩】仙逆（更新至<span class="la">127</span>集） 第一季 年番 无水印</a></div><div class="meta" style="top:38.8px"><span class="cat"><svg class="ci" width="9" height="11" viewBox="0 0 9 11"><path d="M1.800 0H9v8.600H8.300v1.200H9V11H1.800C.8 11 0 10.200 0 9.200V1.800C0 .8.800 0 1.800 0z" fill="#0e9ea3"/><path d="M2.600 2.500h4.300v1H2.600zM2.600 4.300h4.300v1H2.600z" fill="#fff"/><path d="M1.800 8.600h5.700v1.200H1.800a.6.6 0 0 1 0-1.200z" fill="#fff"/></svg>资源荟萃</span><span class="tag">夸克网盘</span><span class="tag"><svg width="15" height="10" viewBox="0 0 15 10" fill="#08e808"><rect width="10" height="10" rx="1.500"/><path d="M10.800 3.500L14 1.200c.4-.3 1-.1 1 .4v6.800c0 .5-.6.700-1 .4l-3.200-2.300z"/></svg>影视</span><span class="tag"><span style="letter-spacing:-.5px">4K</span></span><span class="tag"><svg width="13" height="13" viewBox="0 0 13 13"><circle cx="6.500" cy="6.500" r="6.500" fill="#2fc43a"/><circle cx="4.300" cy="5" r=".9" fill="#fff"/><circle cx="8.700" cy="5" r=".9" fill="#fff"/><path d="M3.500 7.800c.7 1.300 1.800 1.900 3 1.900s2.300-.6 3-1.900" stroke="#fff" stroke-width="1" fill="none" stroke-linecap="round"/></svg>动漫</span></div>
      <div class="avs" style="top:23.0px"><svg class="av" viewBox="0 0 24 24"><use href="#a-me"/></svg></div>
      <span class="num r" style="top:24.0px">2</span><span class="num v warm" style="top:24.0px">1.3k</span><span class="num a" style="top:24.0px">9 小时</span>
    </article>
    <article class="row" style="top:298px;height:93px">
      <div class="tl" style="top:12.3px;left:13px"><a class="title">牧神记 (<span class="la">2024)</span>【<span class="la">4K</span>】【更新<span class="la">69</span>集】【国语】【 中文硬字幕】【 纯净分<br>享】</a></div><div class="meta" style="top:60.0px"><span class="cat"><svg class="ci" width="9" height="11" viewBox="0 0 9 11"><path d="M1.800 0H9v8.600H8.300v1.200H9V11H1.800C.8 11 0 10.200 0 9.200V1.800C0 .8.800 0 1.800 0z" fill="#0e9ea3"/><path d="M2.600 2.500h4.300v1H2.600zM2.600 4.300h4.300v1H2.600z" fill="#fff"/><path d="M1.800 8.600h5.700v1.200H1.800a.6.6 0 0 1 0-1.200z" fill="#fff"/></svg>资源荟萃</span><span class="tag">夸克网盘</span><span class="tag"><svg width="15" height="10" viewBox="0 0 15 10" fill="#08e808"><rect width="10" height="10" rx="1.500"/><path d="M10.800 3.500L14 1.200c.4-.3 1-.1 1 .4v6.800c0 .5-.6.700-1 .4l-3.200-2.300z"/></svg>影视</span><span class="tag"><span style="letter-spacing:-.5px">4K</span></span><span class="tag"><svg width="13" height="13" viewBox="0 0 13 13"><circle cx="6.500" cy="6.500" r="6.500" fill="#2fc43a"/><circle cx="4.300" cy="5" r=".9" fill="#fff"/><circle cx="8.700" cy="5" r=".9" fill="#fff"/><path d="M3.500 7.800c.7 1.300 1.800 1.900 3 1.900s2.300-.6 3-1.900" stroke="#fff" stroke-width="1" fill="none" stroke-linecap="round"/></svg>动漫</span></div>
      <div class="avs" style="top:34.0px"><svg class="av" viewBox="0 0 24 24"><use href="#a-me"/></svg></div>
      <span class="num r" style="top:35.0px">2</span><span class="num v " style="top:35.0px">88</span><span class="num a" style="top:35.0px">9 小时</span>
    </article>
    <article class="row" style="top:391px;height:71px">
      <div class="tl" style="top:12.1px;left:13px"><a class="title">电路【<span class="la">43.5GB</span>】</a></div><div class="meta" style="top:37.9px"><span class="cat"><svg class="ci" width="9" height="11" viewBox="0 0 9 11"><path d="M1.800 0H9v8.600H8.300v1.200H9V11H1.800C.8 11 0 10.200 0 9.200V1.800C0 .8.800 0 1.800 0z" fill="#0e9ea3"/><path d="M2.600 2.500h4.300v1H2.600zM2.600 4.300h4.300v1H2.600z" fill="#fff"/><path d="M1.800 8.600h5.700v1.200H1.800a.6.6 0 0 1 0-1.200z" fill="#fff"/></svg>资源荟萃</span><span class="tag">夸克网盘</span><span class="tag"><svg width="15" height="11" viewBox="0 0 15 11" fill="#0f1880"><path d="M7.500 0L15 2.600 7.500 5.200 2 3.300v2.500H1.100V3L0 2.600z"/><path d="M3.300 4.700l4.200 1.500 4.200-1.500.3 3.300c0 1.200-2 2.200-4.500 2.200S3 9.200 3 8z"/></svg>本科</span></div>
      <div class="avs" style="top:23.0px"><svg class="av" viewBox="0 0 24 24"><use href="#a-me"/></svg><svg class="av" viewBox="0 0 24 24"><use href="#a-blue"/></svg><svg class="av" viewBox="0 0 24 24"><use href="#a-yel"/></svg><svg class="av" viewBox="0 0 24 24"><use href="#a-blue"/></svg></div>
      <span class="num r" style="top:24.0px">4</span><span class="num v " style="top:24.0px">520</span><span class="num a" style="top:24.0px">10 小时</span>
    </article>
    <article class="row" style="top:462px;height:71px">
      <div class="tl" style="top:12.8px;left:13px"><a class="title"><span class="la">Linux Do</span>论坛邀请码，如需要请评论</a></div><div class="meta" style="top:38.0px"><span class="cat"><svg class="ci gift" width="10" height="10" viewBox="0 0 11 11" fill="#e8492a"><path d="M0 3h11v2.500H0z"/><path d="M.8 6.200h4.100V11H.8zM6.100 6.200h4.100V11H6.100z"/><path d="M5.500 3C4 3 2 2.500 2 1.300 2 .5 2.700 0 3.400 0c1 0 1.700 1 2.100 2 .4-1 1.100-2 2.100-2C8.300 0 9 .5 9 1.300 9 2.500 7 3 5.500 3z"/></svg>福利羊毛</span><span class="tag">邀请码</span></div>
      <div class="avs" style="top:23.0px"><svg class="av ring" viewBox="0 0 24 24"><use href="#a-me"/></svg><svg class="av" viewBox="0 0 24 24"><use href="#a-blu2"/></svg><svg class="av" viewBox="0 0 24 24"><use href="#a-pk2"/></svg><svg class="av" viewBox="0 0 24 24"><use href="#a-bw"/></svg><svg class="av" viewBox="0 0 24 24"><use href="#a-pk3"/></svg></div>
      <span class="num r" style="top:24.0px">142</span><span class="num v " style="top:24.0px">625</span><span class="num a" style="top:24.0px">11 小时</span>
    </article>
    <article class="row" style="top:533px;height:84px">
      <div class="tl" style="top:19.8px;left:13px"><a class="title">极限国度 <span class="la">v1.26.0</span> 解压即玩<svg class="pin2" width="12" height="17" viewBox="0 0 12 17"><path d="M6 0a6 6 0 0 1 6 6c0 3.200-3.700 7.600-6 11C3.700 13.600 0 9.200 0 6a6 6 0 0 1 6-6zm0 3.600a2.400 2.400 0 1 0 0 4.800 2.400 2.400 0 0 0 0-4.800z" fill="#8b8b8b" fill-rule="evenodd"/></svg></a></div><div class="meta" style="top:51.1px"><span class="cat"><svg class="ci" width="9" height="11" viewBox="0 0 9 11"><path d="M1.800 0H9v8.600H8.300v1.200H9V11H1.800C.8 11 0 10.200 0 9.200V1.800C0 .8.800 0 1.800 0z" fill="#0e9ea3"/><path d="M2.600 2.500h4.300v1H2.600zM2.600 4.300h4.300v1H2.600z" fill="#fff"/><path d="M1.800 8.600h5.700v1.200H1.800a.6.6 0 0 1 0-1.200z" fill="#fff"/></svg>资源荟萃</span><span class="tag">夸克网盘</span><span class="tag"><svg width="12" height="12" viewBox="0 0 12 12" fill="#1fb3b8"><path d="M0 1.700L4.900 1v4.700H0zM5.500.9L12 0v5.700H5.500zM0 6.300h4.900V11L0 10.300zM5.500 6.300H12V12l-6.500-.9z"/></svg><span style="letter-spacing:.45px">Windows</span></span><span class="tag"><svg width="15" height="9" viewBox="0 0 15 9"><rect width="15" height="9" rx="4.500" fill="#08e808"/><path d="M3 4.500h3M4.500 3v3" stroke="#fff" stroke-width="1.100"/><circle cx="10" cy="5.500" r=".9" fill="#fff"/><circle cx="12" cy="3.500" r=".9" fill="#fff"/></svg>游戏</span></div>
      <div class="avs" style="top:28.5px"><svg class="av" viewBox="0 0 24 24"><use href="#a-me"/></svg></div>
      <span class="num r" style="top:29.5px">0</span><span class="num v " style="top:29.5px">1</span><span class="num a" style="top:29.5px">16 小时</span>
    </article>
    <div id="lastvisit"><span>上次访问</span></div>
  </section>

  <section id="hot" class="card2">
    <h3 class="ch">热门标签</h3>
    <div id="cloud"><a class="ct" style="left:149.5px;top:120.7px;font-size:8.9px;color:#fbdcb4;font-weight:normal">北京：清华大学出版社</a><a class="ct" style="left:216.5px;top:132.5px;font-size:9.1px;color:#f9bccb;font-weight:normal">北京：机械工业出版社</a><a class="ct" style="left:75.0px;top:167.0px;font-size:10.5px;color:#a8e4b8;font-weight:bold">AndroidTV</a><a class="ct" style="left:107.0px;top:229.7px;font-size:9.9px;color:#e5c8f5;font-weight:normal">限免应用</a><a class="ct" style="left:229.2px;top:200.4px;font-size:9.3px;color:#c9cdf0;font-weight:normal">转载</a><a class="ct" style="left:176.0px;top:243.7px;font-size:9.5px;color:#bcd9f7;font-weight:normal">动漫</a><a class="ct" style="left:134.0px;top:65.0px;font-size:13.7px;color:#b06be3;font-weight:bold">影视</a><a class="ct" style="left:159.8px;top:66.7px;font-size:10.5px;color:#f7a6bd;font-weight:bold">Linux</a><a class="ct" style="left:205.0px;top:69.5px;font-size:15.0px;color:#3fc46a;font-weight:bold">考研</a><a class="ct" style="left:227.2px;top:83.8px;font-size:11.0px;color:#a9aee8;font-weight:bold">精华神帖</a><a class="ct" style="left:76.6px;top:103.6px;font-size:15.5px;color:#3b8ff5;font-weight:bold">4K</a><a class="ct" style="left:96.5px;top:100.5px;font-size:10.2px;color:#f9c58d;font-weight:normal">文档</a><a class="ct" style="left:141.3px;top:101.2px;font-size:20.6px;color:#ff9100;font-weight:bold">电子书</a><a class="ct" style="left:257.1px;top:117.0px;font-size:17.0px;color:#ff9500;font-weight:bold">Github</a><a class="ct" style="left:207.2px;top:121.5px;font-size:24.0px;color:#ff2d55;font-weight:bold">Android</a><a class="ct" style="left:268.2px;top:141.5px;font-size:11.2px;color:#6aaef5;font-weight:bold">游戏</a><a class="ct" style="left:89.2px;top:145.5px;font-size:20.6px;color:#34c759;font-weight:bold">iOS</a><a class="ct" style="left:56.2px;top:173.0px;font-size:13.0px;color:#7b7fd6;font-weight:normal">初试</a><a class="ct" style="left:145.7px;top:188.9px;font-size:24.7px;color:#0a7aff;font-weight:bold">软件</a><a class="ct" style="left:209.3px;top:190.2px;font-size:23.0px;color:#5856d6;font-weight:bold">本科</a><a class="ct" style="left:263.8px;top:188.0px;font-size:16.5px;color:#ff2d55;font-weight:bold">MacOS</a><a class="ct" style="left:263.3px;top:212.5px;font-size:11.7px;color:#cfa4ef;font-weight:bold">机场</a><a class="ct" style="left:95.2px;top:215.0px;font-size:20.0px;color:#af52de;font-weight:bold">Windows</a><a class="ct" style="left:82.7px;top:237.5px;font-size:13.0px;color:#ff5c7a;font-weight:normal">北京：高等教育出版社</a><a class="ct" style="left:221.7px;top:246.5px;font-size:17.0px;color:#5856d6;font-weight:bold">西安理工大学</a><a class="ct" style="left:152.4px;top:258.6px;font-size:17.9px;color:#0a7aff;font-weight:bold">求资源</a><a class="ct" style="left:214.9px;top:263.9px;font-size:12.0px;color:#7dd99b;font-weight:bold">快问快答</a><a class="ct" style="left:145.0px;top:274.3px;font-size:12.5px;color:#fcb05e;font-weight:bold">人工智能</a></div>
    <a id="viewall">查看全部</a>
  </section>
  <section id="recent" class="card2">
    <h3 class="ch">最近回复</h3>
    <div class="rp" style="top:38px;height:114px"><svg class="av2" style="top:8.1px" viewBox="0 0 24 24"><use href="#a-pur"/></svg><span class="tx" style="top:8.6px">不错 不错</span><span class="tm" style="right:1px;top:9.6px">1 小时</span><a class="lk" style="top:30.1px">Thunderstore 游戏模组管理器<br>R2Modman v3.2.14 汉化安装版/绿<br>色单文件版</a></div>
    <div class="rp" style="top:152px;height:78px"><svg class="av2" style="top:16.8px" viewBox="0 0 24 24"><use href="#a-blue"/></svg><span class="tx" style="top:16.3px">看文件，特此回复</span><span class="tm" style="left:234px;top:17.3px">7 小时</span><a class="lk" style="top:39.8px">大学物理 大物【109.6GB】</a></div>
    <div class="rp" style="top:230px;height:78px"><svg class="av2" style="top:17.3px" viewBox="0 0 24 24"><use href="#a-blue"/></svg><span class="tx" style="top:15.8px">想看文件，特此回复</span><span class="tm" style="left:184px;top:16.8px">10 小时</span><a class="lk" style="top:38.8px">电路【43.5GB】</a></div>
    <div class="rp" style="top:308px;height:78px"><svg class="av2" style="top:16.8px" viewBox="0 0 24 24"><use href="#a-tan"/></svg><span class="tx" style="top:15.3px">收藏 【网盘包/绿色版】好</span><span class="tm" style="left:251px;top:16.3px">12 小时</span><a class="lk" style="top:38.3px">极限国度 v1.26.0 解压即玩</a></div>
  </section>
</main>
</div>
</body>
</html>
